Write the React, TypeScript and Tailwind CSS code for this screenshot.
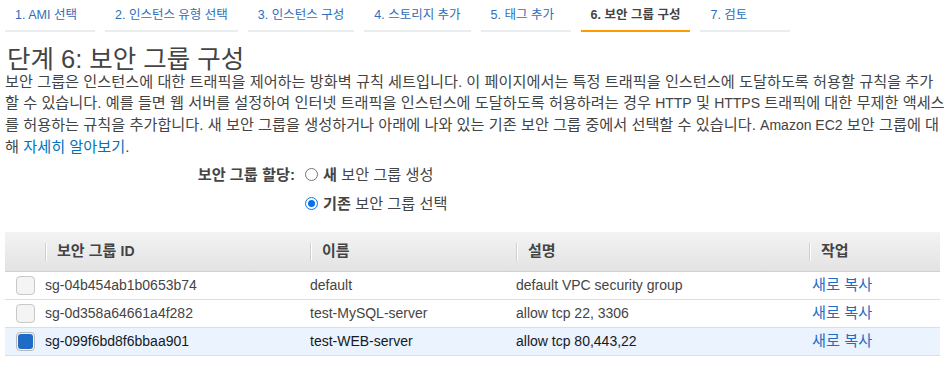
import React from "react";

const FONT = { fontFamily: '"Liberation Sans", "Noto Sans CJK KR", Arial, sans-serif' };

const tabs = [
  "1. AMI 선택",
  "2. 인스턴스 유형 선택",
  "3. 인스턴스 구성",
  "4. 스토리지 추가",
  "5. 태그 추가",
  "6. 보안 그룹 구성",
  "7. 검토",
];

const rows = [
  { id: "sg-04b454ab1b0653b74", name: "default", desc: "default VPC security group", sel: false },
  { id: "sg-0d358a64661a4f282", name: "test-MySQL-server", desc: "allow tcp 22, 3306", sel: false },
  { id: "sg-099f6bd8f6bbaa901", name: "test-WEB-server", desc: "allow tcp 80,443,22", sel: true },
];

function Radio({ checked }: { checked: boolean }) {
  return checked ? (
    <span className="inline-flex h-[13px] w-[13px] items-center justify-center rounded-full border-[1.5px] border-[#0b74e5] bg-white">
      <span className="h-[7px] w-[7px] rounded-full bg-[#0b74e5]" />
    </span>
  ) : (
    <span className="inline-block h-[13px] w-[13px] rounded-full border border-[#767676] bg-white" />
  );
}

function Check({ checked }: { checked: boolean }) {
  return checked ? (
    <span className="flex h-[19px] w-[19px] items-center justify-center rounded-[4px] border border-[#b8b8b8] bg-[#f4f4f4]">
      <span className="h-[15px] w-[15px] rounded-[3px] bg-[#1f6cc7]" />
    </span>
  ) : (
    <span className="block h-[19px] w-[19px] rounded-[4px] border border-[#c8c8c8] bg-[#f4f4f4]" />
  );
}

function HeadCell({ label }: { label: React.ReactNode }) {
  return (
    <div className="flex h-full items-center">
      <span className="h-[18px] w-[2px] border-l border-[#cfcfcf] bg-white" />
      <span className="ml-[10px] text-[15px] font-bold text-[#444]">{label}</span>
    </div>
  );
}

export default function App() {
  return (
    <div className="w-[945px] h-[366px] bg-white px-[5px] text-[#444]" style={FONT}>
      <div className="flex gap-[10px] pt-[8px]">
        {tabs.map((t, i) => (
          <div
            key={t}
            className={`min-w-[90px] px-[10px] h-[24px] text-[12.5px] leading-[15px] whitespace-nowrap border-b-2 ${
              i === 5 ? "border-[#f90] text-[#444] font-semibold" : "border-[#eaeded] text-[#2f6dba]"
            }`}
          >
            {t}
          </div>
        ))}
      </div>

      <h1 className="mt-[15px] text-[25.5px] leading-[24px] text-[#444] pl-[2px]">단계 6: 보안 그룹 구성</h1>

      <div className="text-[15.2px] leading-[21px] text-[#444] whitespace-nowrap">
        <div>보안 그룹은 인스턴스에 대한 트래픽을 제어하는 방화벽 규칙 세트입니다. 이 페이지에서는 특정 트래픽을 인스턴스에 도달하도록 허용할 규칙을 추가</div>
        <div>
          할 수 있습니다. 예를 들면 웹 서버를 설정하여 인터넷 트래픽을 인스턴스에 도달하도록 허용하려는 경우 <span className="text-[14px]">HTTP</span> 및{" "}
          <span className="text-[14px]">HTTPS</span> 트래픽에 대한 무제한 액세스
        </div>
        <div>
          를 허용하는 규칙을 추가합니다. 새 보안 그룹을 생성하거나 아래에 나와 있는 기존 보안 그룹 중에서 선택할 수 있습니다.{" "}
          <span className="text-[14px]">Amazon EC2</span> 보안 그룹에 대
        </div>
        <div>
          해 <span className="text-[#0073bb]">자세히 알아보기</span>.
        </div>
      </div>

      <div className="mt-[3px] grid grid-cols-[290px_1fr] gap-x-[10px] text-[15.2px] leading-[29px]">
        <div className="text-right font-bold text-[#444]">보안 그룹 할당:</div>
        <div className="flex items-center gap-[5px]">
          <Radio checked={false} />
          <span><b>새</b> 보안 그룹 생성</span>
        </div>
        <div />
        <div className="flex items-center gap-[5px]">
          <Radio checked={true} />
          <span><b>기존</b> 보안 그룹 선택</span>
        </div>
      </div>

      <div className="mt-[14px] text-[14px]">
        <div className="grid h-[40px] grid-cols-[40px_265px_206px_293px_1fr] border-b border-[#d0d0d0] bg-gradient-to-b from-[#f3f3f3] to-[#e3e3e3]">
          <div />
          <HeadCell label={<>보안 그룹 <span className="text-[14px]">ID</span></>} />
          <HeadCell label="이름" />
          <HeadCell label="설명" />
          <HeadCell label="작업" />
        </div>
        {rows.map((r) => (
          <div
            key={r.id}
            className={`grid h-[28px] grid-cols-[40px_265px_206px_293px_1fr] items-center border-b border-[#dedede] ${
              r.sel ? "bg-[#eaf3fe] text-[#16191f]" : "bg-white text-[#444]"
            }`}
          >
            <div className="flex justify-center pl-[1px]">
              <Check checked={r.sel} />
            </div>
            <div>{r.id}</div>
            <div>{r.name}</div>
            <div>{r.desc}</div>
            <div className="pl-[3px] text-[15.2px] text-[#1f6cc7]">새로 복사</div>
          </div>
        ))}
      </div>
    </div>
  );
}
